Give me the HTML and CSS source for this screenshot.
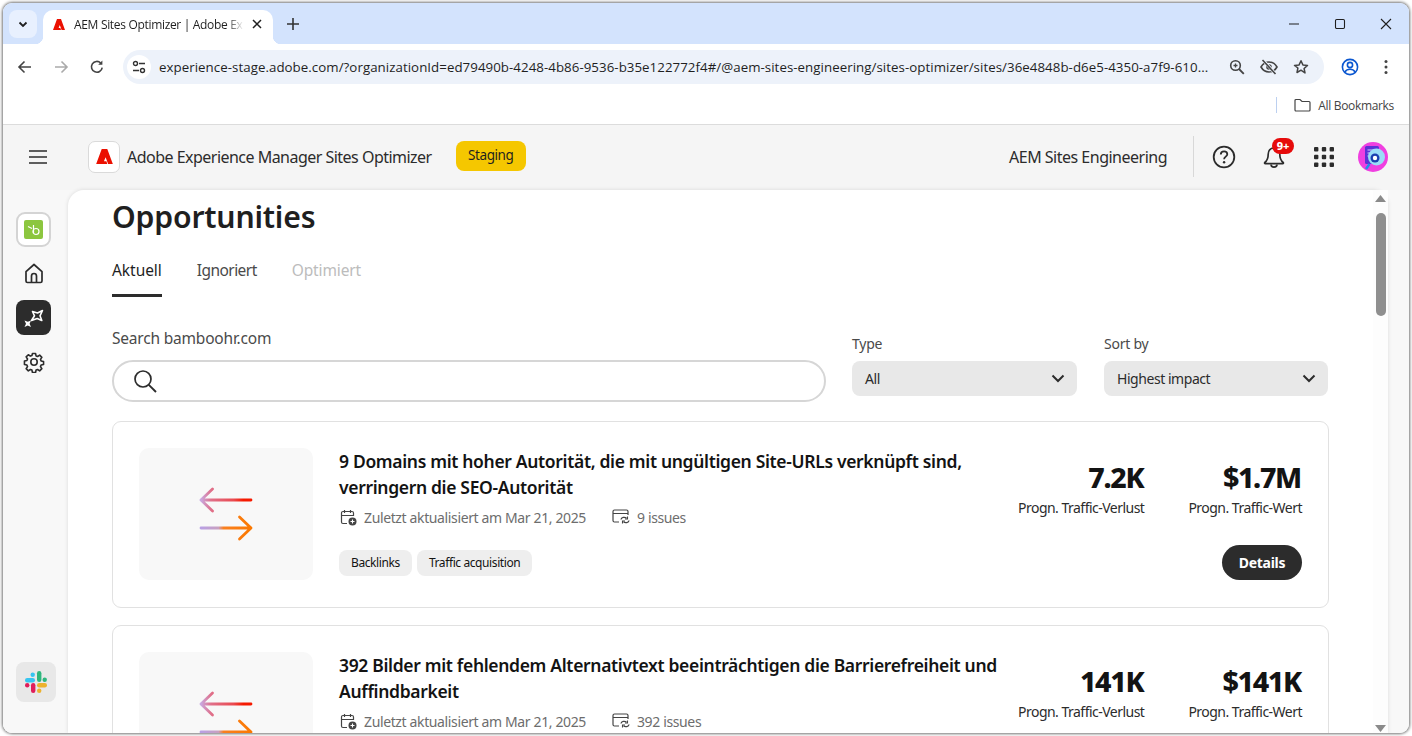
FILE: index.html
```html
<!DOCTYPE html>
<html lang="de">
<head>
<meta charset="utf-8">
<title>AEM Sites Optimizer | Adobe Experience Manager</title>
<link rel="stylesheet" href="styles.css">
</head>
<body>
<div class="window">
  <div class="tabstrip">
    <div class="tab-search"><svg width="12" height="12" viewBox="0 0 12 12"><path d="M2.5 4.5 6 8l3.5-3.5" fill="none" stroke="#1f1f1f" stroke-width="1.8"/></svg></div>
    <div class="tab">
      <svg class="tab-fav" width="12" height="11" viewBox="0 0 30 27"><path d="M10 0h10l10 27H21.500L17 15l-3 7h4.500l1.500 5H0z" fill="#eb1000"/></svg>
      <span class="tab-title">AEM Sites Optimizer | Adobe Ex</span>
      <svg width="12" height="12" viewBox="0 0 12 12"><path d="M2 2l8 8M10 2l-8 8" stroke="#1f1f1f" stroke-width="1.5"/></svg>
    </div>
    <svg class="new-tab" width="14" height="14" viewBox="0 0 14 14"><path d="M7 1v12M1 7h12" stroke="#333" stroke-width="1.6"/></svg>
    <div class="win-controls">
      <svg width="12" height="12" viewBox="0 0 12 12"><path d="M1 6h10" stroke="#1f1f1f" stroke-width="1.1"/></svg>
      <svg width="12" height="12" viewBox="0 0 12 12"><rect x="1.5" y="1.5" width="9" height="9" rx="1.2" fill="none" stroke="#1f1f1f" stroke-width="1.1"/></svg>
      <svg width="12" height="12" viewBox="0 0 12 12"><path d="M1 1l10 10M11 1 1 11" stroke="#1f1f1f" stroke-width="1.1"/></svg>
    </div>
  </div>

  <div class="toolbar">
    <svg width="16" height="16" viewBox="0 0 16 16"><path d="M14 8H2.500M7.500 2.500 2 8l5.500 5.500" fill="none" stroke="#444" stroke-width="1.6"/></svg>
    <svg class="gap-nav" width="16" height="16" viewBox="0 0 16 16"><path d="M2 8h11.500M8.500 2.500 14 8l-5.500 5.500" fill="none" stroke="#aaa" stroke-width="1.6"/></svg>
    <svg class="gap-nav" width="16" height="16" viewBox="0 0 16 16"><path d="M13.200 8.600A5.400 5.400 0 1 1 11.700 4" fill="none" stroke="#444" stroke-width="1.6"/><path d="M13.400 1.500v4.200H9.200z" fill="#444"/></svg>
    <div class="omnibox">
      <span class="site-chip"><svg width="14" height="14" viewBox="0 0 14 14"><circle cx="3.500" cy="3.500" r="2" fill="none" stroke="#333" stroke-width="1.4"/><path d="M7 3.500h6M1 10.500h6" stroke="#333" stroke-width="1.4"/><circle cx="10.500" cy="10.500" r="2" fill="none" stroke="#333" stroke-width="1.4"/></svg></span>
      <span class="url">experience-stage.adobe.com/?organizationId=ed79490b-4248-4b86-9536-b35e122772f4#/@aem-sites-engineering/sites-optimizer/sites/36e4848b-d6e5-4350-a7f9-610...</span>
      <svg class="omni-zoom" width="16" height="16" viewBox="0 0 16 16"><circle cx="6.500" cy="6.500" r="4.800" fill="none" stroke="#444" stroke-width="1.6"/><path d="M10 10l4.800 4.800" stroke="#444" stroke-width="1.8"/><path d="M4.500 6.500h4M6.500 4.500v4" stroke="#444" stroke-width="1.3"/></svg>
      <svg class="omni-eye" width="18" height="16" viewBox="0 0 18 16"><path d="M1 8c2-3.400 4.800-5 8-5s6 1.600 8 5c-2 3.400-4.800 5-8 5s-6-1.600-8-5z" fill="none" stroke="#444" stroke-width="1.6"/><circle cx="9" cy="8" r="2.800" fill="#444"/><path d="M3 1l12.500 14" stroke="#edf2fa" stroke-width="3"/><path d="M2.500 1l13 14" stroke="#444" stroke-width="1.6"/></svg>
      <svg class="omni-star" width="16" height="16" viewBox="0 0 16 16"><path d="m8 1.700 1.900 4.200 4.600.5-3.400 3.100.9 4.500L8 11.200 4 13.500l.9-4.500L1.500 6.400l4.600-.5z" fill="none" stroke="#444" stroke-width="1.5" stroke-linejoin="round"/></svg>
    </div>
    <svg class="profile" width="18" height="18" viewBox="0 0 18 18"><circle cx="9" cy="9" r="7.600" fill="none" stroke="#0b57d0" stroke-width="1.6"/><circle cx="9" cy="7" r="2.600" fill="none" stroke="#0b57d0" stroke-width="1.6"/><path d="M3.800 14c1.400-2 3.200-2.700 5.200-2.700s3.800.7 5.200 2.700" fill="none" stroke="#0b57d0" stroke-width="1.6"/></svg>
    <svg class="kebab" width="4" height="16" viewBox="0 0 4 16"><circle cx="2" cy="2.500" r="1.500" fill="#444"/><circle cx="2" cy="8" r="1.500" fill="#444"/><circle cx="2" cy="13.500" r="1.500" fill="#444"/></svg>
  </div>

  <div class="bookmarks">
    <span class="bm-sep"></span>
    <svg width="17" height="14" viewBox="0 0 17 14"><path d="M1 2.500a1 1 0 0 1 1-1h4l2 2h7a1 1 0 0 1 1 1v7.500a1 1 0 0 1-1 1H2a1 1 0 0 1-1-1z" fill="none" stroke="#444" stroke-width="1.2"/></svg>
    <span class="bm-label">All Bookmarks</span>
  </div>

  <div class="app">
    <header class="app-header">
      <svg class="hamburger" width="18" height="14" viewBox="0 0 18 14"><path d="M0 1h18M0 7h18M0 13h18" stroke="#2c2c2c" stroke-width="1.7"/></svg>
      <span class="logo-box"><svg width="17" height="15" viewBox="0 0 30 27"><path d="M10 0h10l10 27H21.500L17 15l-3 7h4.500l1.500 5H0z" fill="#eb1000"/></svg></span>
      <span class="app-title">Adobe Experience Manager Sites Optimizer</span>
      <span class="badge-staging">Staging</span>
      <span class="org">AEM Sites Engineering</span>
      <span class="head-sep"></span>
      <svg class="ic-help" width="24" height="24" viewBox="0 0 24 24"><circle cx="12" cy="12" r="10.300" fill="none" stroke="#2c2c2c" stroke-width="1.8"/><path d="M8.800 9.500c0-2 1.500-3.200 3.300-3.200s3.200 1.200 3.200 2.900c0 2.400-3.200 2.500-3.200 5" fill="none" stroke="#2c2c2c" stroke-width="1.8"/><circle cx="12.100" cy="17.300" r="1.200" fill="#2c2c2c"/></svg>
      <span class="bell">
        <svg width="22" height="24" viewBox="0 0 22 24"><path d="M11 3c-3.800 0-5.800 2.800-5.800 6.200 0 4.300-1.200 6.500-3.400 8.300-.5.500-.2 1.200.5 1.200h17.400c.7 0 1-.7.500-1.200-2.200-1.800-3.400-4-3.400-8.300C16.800 5.800 14.800 3 11 3z" fill="none" stroke="#2c2c2c" stroke-width="1.7"/><path d="M8 19.500c0 3.400 6 3.400 6 0" fill="none" stroke="#2c2c2c" stroke-width="1.7"/></svg>
        <span class="bell-badge">9+</span>
      </span>
      <svg class="ic-grid" width="20" height="20" viewBox="0 0 20 20"><g fill="#2c2c2c"><rect width="4.400" height="4.400" rx="1"/><rect x="7.800" width="4.400" height="4.400" rx="1"/><rect x="15.600" width="4.400" height="4.400" rx="1"/><rect y="7.800" width="4.400" height="4.400" rx="1"/><rect x="7.800" y="7.800" width="4.400" height="4.400" rx="1"/><rect x="15.600" y="7.800" width="4.400" height="4.400" rx="1"/><rect y="15.600" width="4.400" height="4.400" rx="1"/><rect x="7.800" y="15.600" width="4.400" height="4.400" rx="1"/><rect x="15.600" y="15.600" width="4.400" height="4.400" rx="1"/></g></svg>
      <svg class="avatar" width="30" height="30" viewBox="0 0 30 30"><circle cx="15" cy="15" r="15" fill="#f03fe0"/><rect x="7" y="4" width="14" height="18" rx="1.500" fill="#5b32d6"/><path d="M9.500 8h8M9.500 11h5M9.500 14h3" stroke="#d9c8ff" stroke-width="1.2"/><circle cx="18.500" cy="15" r="8.500" fill="#9adcf7"/><circle cx="17" cy="16" r="4.500" fill="#1b3fb0"/><circle cx="17" cy="16" r="2.200" fill="#fff"/><path d="M11.500 22l-3.500 5" stroke="#1e90e8" stroke-width="2.500"/></svg>
    </header>

    <div class="app-body">
      <nav class="sidebar">
        <span class="brand-box"><span class="brand-inner"><svg width="18" height="18" viewBox="0 0 18 18"><path d="M3 5.500l4 2M8.500 4v8" stroke="#fff" stroke-width="1.2" fill="none"/><circle cx="11" cy="10.500" r="3" fill="none" stroke="#fff" stroke-width="1.2"/></svg></span></span>
        <svg class="nav-home" width="20" height="21" viewBox="0 0 20 21"><path d="M2 8.700 10 1.500l8 7.200V18a1.500 1.500 0 0 1-1.500 1.500h-13A1.500 1.500 0 0 1 2 18z" fill="none" stroke="#2c2c2c" stroke-width="1.7" stroke-linejoin="round"/><path d="M7.500 19.500V13a2.500 2.500 0 0 1 5 0v6.500" fill="none" stroke="#2c2c2c" stroke-width="1.7"/></svg>
        <span class="nav-active"><svg width="22" height="22" viewBox="0 0 22 22"><path d="M9.500 4.500 14.500 6l5-2.500L17 8.800l1.800 4.700-4.600-2-5.700 2 3-4.700z" fill="none" stroke="#fff" stroke-width="1.6" stroke-linejoin="round"/><path d="M1.500 13.500 4.800 14.800 8 13.500 6.600 16.800 8 20 4.800 18.600 1.500 20 3 16.800z" fill="#fff"/></svg></span>
        <svg class="nav-gear" width="22" height="22" viewBox="0 0 22 22"><path d="M9.300 1.500h3.400l.6 2.700 1.700.7 2.300-1.500 2.400 2.400-1.500 2.300.7 1.700 2.700.6v3.400l-2.700.6-.7 1.700 1.500 2.300-2.400 2.400-2.300-1.500-1.700.7-.6 2.700H9.300l-.6-2.700-1.700-.7-2.300 1.500-2.400-2.400 1.500-2.300-.7-1.700-2.700-.6V9.900l2.700-.6.7-1.700-1.500-2.300 2.400-2.400 2.300 1.500 1.700-.7z" transform="translate(1.100 1.100) scale(.9)" fill="none" stroke="#2c2c2c" stroke-width="1.8" stroke-linejoin="round"/><circle cx="11" cy="11" r="3.200" fill="none" stroke="#2c2c2c" stroke-width="1.6"/></svg>
        <span class="slack-box"><svg width="22" height="22" viewBox="0 0 22 22"><rect x="0" y="7" width="10" height="4.400" rx="2.200" fill="#36c5f0"/><rect x="5.500" y="1.500" width="4.400" height="4.400" rx="2.200" fill="#36c5f0"/><rect x="12" y="0" width="4.400" height="11" rx="2.200" fill="#2eb67d"/><rect x="17.500" y="6.500" width="4.400" height="4.400" rx="2.200" fill="#2eb67d"/><rect x="12" y="12" width="10" height="4.400" rx="2.200" fill="#ecb22e"/><rect x="12" y="17.500" width="4.400" height="4.400" rx="2.200" fill="#ecb22e"/><rect x="6" y="12" width="4.400" height="10" rx="2.200" fill="#e01e5a"/><rect x="0" y="12" width="4.400" height="4.400" rx="2.200" fill="#e01e5a"/></svg></span>
      </nav>

      <main class="panel">
        <div class="content">
          <h1 class="page-title">Opportunities</h1>
          <div class="tabs">
            <span class="tabitem tabitem-active">Aktuell</span>
            <span class="tabitem tabitem-ignored">Ignoriert</span>
            <span class="tabitem tabitem-off">Optimiert</span>
          </div>
          <div class="filters">
            <div class="search-col">
              <span class="search-label">Search bamboohr.com</span>
              <div class="search-input"><svg width="24" height="24" viewBox="0 0 24 24"><circle cx="10" cy="10" r="8" fill="none" stroke="#2c2c2c" stroke-width="1.7"/><path d="M15.800 15.800 23 23" stroke="#2c2c2c" stroke-width="1.9"/></svg></div>
            </div>
            <div class="select-col">
              <span class="select-label">Type</span>
              <div class="select"><span>All</span><svg width="14" height="9" viewBox="0 0 14 9"><path d="M1.500 1.500 7 7l5.500-5.500" fill="none" stroke="#2c2c2c" stroke-width="2"/></svg></div>
            </div>
            <div class="select-col select-col-sort">
              <span class="select-label">Sort by</span>
              <div class="select"><span>Highest impact</span><svg width="14" height="9" viewBox="0 0 14 9"><path d="M1.500 1.500 7 7l5.500-5.500" fill="none" stroke="#2c2c2c" stroke-width="2"/></svg></div>
            </div>
          </div>

          <article class="card">
            <div class="thumb"><svg width="54" height="54" viewBox="0 0 54 54"><defs><linearGradient id="g1" x1="0" x2="1" y1="0" y2="0"><stop offset="0" stop-color="#c9a8e0"/><stop offset=".2" stop-color="#e0708a"/><stop offset=".65" stop-color="#ea4a50"/><stop offset=".85" stop-color="#f51a00"/></linearGradient><linearGradient id="g2" x1="0" x2="1" y1="0" y2="0"><stop offset="0" stop-color="#b9a0e4"/><stop offset=".35" stop-color="#c8a0c0"/><stop offset=".45" stop-color="#f98020"/><stop offset="1" stop-color="#fb7800"/></linearGradient></defs><path d="M13.500 2 2 13l11.500 11M2 13h50" fill="none" stroke="url(#g1)" stroke-width="2.8" stroke-linecap="round" stroke-linejoin="round"/><path d="M2 41h50M40.500 30 52 41 40.500 52" fill="none" stroke="url(#g2)" stroke-width="2.8" stroke-linecap="round" stroke-linejoin="round"/></svg></div>
            <div class="card-body">
              <h2 class="card-title">9 Domains mit hoher Autorität, die mit ungültigen Site-URLs verknüpft sind, verringern die SEO-Autorität</h2>
              <div class="meta">
                <svg class="meta-cal" width="17" height="17" viewBox="0 0 17 17"><path d="M7 14.500H3a1.500 1.500 0 0 1-1.500-1.500V4A1.500 1.500 0 0 1 3 2.500h9A1.500 1.500 0 0 1 13.500 4v3M1.500 6.500h12M4.500 1v3M10.500 1v3" fill="none" stroke="#444" stroke-width="1.2"/><circle cx="12.500" cy="12.500" r="4" fill="#444"/><path d="M12.500 10.500v4M10.500 12.500h4" stroke="#fff" stroke-width="1.1"/></svg>
                <span>Zuletzt aktualisiert am Mar 21, 2025</span>
                <svg class="meta-issues" width="18" height="16" viewBox="0 0 18 16"><path d="M7 13H2.500A1.500 1.500 0 0 1 1 11.500v-9A1.500 1.500 0 0 1 2.500 1h12A1.500 1.500 0 0 1 16 2.500V6M1 4.500h15" fill="none" stroke="#444" stroke-width="1.2"/><path d="M9 10.500c.3-2 3.700-3 5.500-1.200M17 11.500c-.3 2-3.700 3-5.500 1.200" fill="none" stroke="#444" stroke-width="1.3"/><path d="M15.500 7.500v2.500H13M10.500 14.500V12H13" fill="none" stroke="#444" stroke-width="1.1"/></svg>
                <span>9 issues</span>
              </div>
              <div class="tags"><span class="tag">Backlinks</span><span class="tag">Traffic acquisition</span></div>
            </div>
            <div class="card-side">
              <div class="stats">
                <div class="stat"><strong>7.2K</strong><span>Progn. Traffic-Verlust</span></div>
                <div class="stat"><strong>$1.7M</strong><span>Progn. Traffic-Wert</span></div>
              </div>
              <button class="details">Details</button>
            </div>
          </article>

          <article class="card">
            <div class="thumb"><svg width="54" height="54" viewBox="0 0 54 54"><path d="M13.500 2 2 13l11.500 11M2 13h50" fill="none" stroke="url(#g1)" stroke-width="2.8" stroke-linecap="round" stroke-linejoin="round"/><path d="M2 41h50M40.500 30 52 41 40.500 52" fill="none" stroke="url(#g2)" stroke-width="2.8" stroke-linecap="round" stroke-linejoin="round"/></svg></div>
            <div class="card-body">
              <h2 class="card-title">392 Bilder mit fehlendem Alternativtext beeinträchtigen die Barrierefreiheit und Auffindbarkeit</h2>
              <div class="meta">
                <svg class="meta-cal" width="17" height="17" viewBox="0 0 17 17"><path d="M7 14.500H3a1.500 1.500 0 0 1-1.500-1.500V4A1.500 1.500 0 0 1 3 2.500h9A1.500 1.500 0 0 1 13.500 4v3M1.500 6.500h12M4.500 1v3M10.500 1v3" fill="none" stroke="#444" stroke-width="1.2"/><circle cx="12.500" cy="12.500" r="4" fill="#444"/><path d="M12.500 10.500v4M10.500 12.500h4" stroke="#fff" stroke-width="1.1"/></svg>
                <span>Zuletzt aktualisiert am Mar 21, 2025</span>
                <svg class="meta-issues" width="18" height="16" viewBox="0 0 18 16"><path d="M7 13H2.500A1.500 1.500 0 0 1 1 11.500v-9A1.500 1.500 0 0 1 2.500 1h12A1.500 1.500 0 0 1 16 2.500V6M1 4.500h15" fill="none" stroke="#444" stroke-width="1.2"/><path d="M9 10.500c.3-2 3.700-3 5.500-1.200M17 11.500c-.3 2-3.700 3-5.500 1.200" fill="none" stroke="#444" stroke-width="1.3"/><path d="M15.500 7.500v2.500H13M10.500 14.500V12H13" fill="none" stroke="#444" stroke-width="1.1"/></svg>
                <span>392 issues</span>
              </div>
            </div>
            <div class="card-side">
              <div class="stats">
                <div class="stat"><strong>141K</strong><span>Progn. Traffic-Verlust</span></div>
                <div class="stat"><strong>$141K</strong><span>Progn. Traffic-Wert</span></div>
              </div>
            </div>
          </article>
        </div>
        <div class="scrollbar">
          <svg width="11" height="7" viewBox="0 0 11 7"><path d="M5.500 0 11 7H0z" fill="#8a8a8a"/></svg>
          <span class="thumb-bar"></span>
          <svg class="scroll-down" width="11" height="7" viewBox="0 0 11 7"><path d="M5.500 7 11 0H0z" fill="#8a8a8a"/></svg>
        </div>
      </main>
    </div>
  </div>
</div>
</body>
</html>
```
FILE: styles.css
```css
* { box-sizing: border-box; }
html, body { margin: 0; height: 100%; overflow: hidden; background: #fff; }
body { padding: 3px; font-family: "Noto Sans", "Open Sans", sans-serif; color: #2c2c2c; }

.window {
  width: 1406px; height: 730px;
  display: flex; flex-direction: column;
  border-radius: 9px; overflow: hidden;
  box-shadow: 0 0 3px 1px rgba(0,0,0,.55);
  background: #fff;
}

/* browser chrome */
.tabstrip { height: 41px; flex: none; display: flex; align-items: flex-end; background: #d3e3fd; padding-left: 6px; }
.tab-search { width: 28px; height: 28px; margin-bottom: 6px; border-radius: 8px; background: #e8f0fe; display: flex; align-items: center; justify-content: center; }
.tab { position: relative; width: 230px; height: 34px; margin-left: 6px; background: #fff; border-radius: 10px 10px 0 0; display: flex; align-items: center; padding: 0 10px 6px 10px; }
.tab::before, .tab::after { content: ""; position: absolute; bottom: 0; width: 8px; height: 8px; }
.tab::before { left: -8px; background: radial-gradient(circle at 0 0, transparent 8px, #fff 8.5px); }
.tab::after { right: -8px; background: radial-gradient(circle at 100% 0, transparent 8px, #fff 8.5px); }
.tab-fav { flex: none; }
.tab-title { flex: 1; margin-left: 9px; font: 12px "Open Sans", sans-serif; letter-spacing: -.32px; color: #1f1f1f; white-space: nowrap; -webkit-mask-image: linear-gradient(90deg, #000 152px, transparent 170px); mask-image: linear-gradient(90deg, #000 152px, transparent 170px); }
.new-tab { margin: 0 0 13px 13px; }
.win-controls { margin-left: auto; display: flex; gap: 34px; padding-right: 17px; margin-bottom: 14px; }

.toolbar { height: 44px; flex: none; display: flex; align-items: center; padding: 1px 0 0 14px; background: #fff; }
.gap-nav { margin-left: 20px; }
.omnibox { width: 1201px; height: 34px; margin-left: 18px; border-radius: 17px; background: #edf2fa; display: flex; align-items: center; padding-left: 4px; flex: none; }
.site-chip { width: 24px; height: 24px; border-radius: 50%; background: #fff; display: flex; align-items: center; justify-content: center; flex: none; }
.url { margin-left: 8px; width: 1050px; flex: none; font: 13.3px "Open Sans", sans-serif; letter-spacing: .045px; color: #1f1f1f; white-space: nowrap; }
.omni-zoom { margin-left: 20px; }
.omni-eye { margin-left: 15px; }
.omni-star { margin-left: 15px; }
.profile { margin-left: 17px; }
.kebab { margin-left: 25px; }

.bookmarks { height: 37px; flex: none; display: flex; align-items: center; justify-content: flex-end; padding: 0 15px 2px 0; background: #fff; border-bottom: 1px solid #dcdcdc; }
.bm-sep { width: 1px; height: 16px; background: #bcd0f0; margin-right: 17px; }
.bm-label { margin-left: 7px; font: 12px "Open Sans", sans-serif; letter-spacing: -.33px; color: #444; }

/* app shell */
.app { flex: 1; min-height: 0; display: flex; flex-direction: column; background: #f8f8f8; }
.app-header { height: 65px; flex: none; display: flex; align-items: center; background: #f5f5f5; padding: 0 0 2px 26px; }
.hamburger { flex: none; }
.logo-box { width: 32px; height: 32px; margin-left: 41px; border: 1px solid #dadada; border-radius: 7px; background: #fff; display: flex; align-items: center; justify-content: center; }
.app-title { margin-left: 7px; font-size: 16px; letter-spacing: -.52px; color: #2c2c2c; white-space: nowrap; }
.badge-staging { width: 70px; height: 30px; margin: -2px 0 0 24px; border-radius: 8px; background: #f5c700; font-size: 13.5px; letter-spacing: -.4px; display: flex; align-items: center; justify-content: center; color: #1f1f1f; padding-bottom: 2px; }
.org { margin-left: auto; font-size: 16px; letter-spacing: -.5px; }
.head-sep { width: 1px; height: 41px; background: #d8d8d8; margin-left: 26px; }
.ic-help { margin-left: 18px; }
.bell { position: relative; margin-left: 27px; display: flex; }
.bell-badge { position: absolute; left: 9px; top: -7px; width: 22px; height: 16px; border-radius: 8px; background: #e60b0b; color: #fff; font-size: 11px; font-weight: 800; line-height: 15px; text-align: center; }
.ic-grid { margin-left: 29px; }
.avatar { margin: 0 21px 0 24px; }

.app-body { flex: 1; min-height: 0; display: flex; }
.sidebar { width: 65px; flex: none; display: flex; flex-direction: column; align-items: flex-start; padding: 22px 0 0 13px; background: #f8f8f8; }
.brand-box { width: 35px; height: 35px; border: 2px solid #d4d4d4; border-radius: 9px; background: #fff; display: flex; align-items: center; justify-content: center; }
.brand-inner { width: 19px; height: 19px; border-radius: 2px; background: #8cc63f; display: flex; align-items: center; justify-content: center; }
.nav-home { margin: 16px 0 0 8px; }
.nav-active { width: 35px; height: 35px; margin-top: 16px; border-radius: 8px; background: #2c2c2c; display: flex; align-items: center; justify-content: center; }
.nav-gear { margin: 16px 0 0 7px; }
.slack-box { width: 40px; height: 40px; margin-top: auto; margin-bottom: 31px; border-radius: 8px; background: #e8e8e8; display: flex; align-items: center; justify-content: center; }

.panel { flex: 1; min-width: 0; margin-right: 21px; display: flex; background: #fff; border-radius: 16px 16px 0 0; box-shadow: 0 0 4px rgba(0,0,0,.12); }
.content { flex: 1; min-width: 0; overflow: hidden; padding-left: 44px; padding-right: 44px; }
.scrollbar { width: 15px; flex: none; display: flex; flex-direction: column; align-items: center; padding-top: 5px; background: #fdfdfd; }
.thumb-bar { width: 10px; height: 103px; margin-top: 11px; border-radius: 5px; background: #8f8f8f; }
.scroll-down { margin-top: auto; transform: translateY(-1px); }

.page-title { margin: 5px 0 0; font-size: 30.2px; line-height: 44px; font-weight: 600; letter-spacing: -.2px; color: #1f1f1f; }
.tabs { display: flex; gap: 35px; height: 45px; margin-top: 13px; }
.tabitem { font-size: 15.5px; letter-spacing: -.3px; line-height: 36px; color: #4a4a4a; height: 45px; }
.tabitem-active { color: #1f1f1f; letter-spacing: -.05px; border-bottom: 3px solid #2c2c2c; }
.tabitem-ignored { letter-spacing: -.55px; }
.tabitem-off { color: #bcbcbc; letter-spacing: -.12px; }

.filters { display: flex; gap: 26px; margin-top: 30px; }
.search-col { width: 714px; flex: none; display: flex; flex-direction: column; gap: 11px; padding-top: 1px; }
.search-label { font-size: 15.5px; letter-spacing: -.2px; line-height: 21px; color: #4a4a4a; }
.search-input { height: 42px; border: 2px solid #d6d6d6; border-radius: 21px; background: #fff; display: flex; align-items: center; padding-left: 19px; }
.select-col { width: 225px; flex: none; display: flex; flex-direction: column; padding-top: 7px; gap: 8px; }
.select-col-sort { width: 224px; margin-left: 1px; }
.select-label { font-size: 14px; letter-spacing: -.25px; line-height: 19px; color: #4a4a4a; }
.select { height: 35px; border-radius: 8px; background: #e8e8e8; display: flex; align-items: center; justify-content: space-between; padding: 0 12px 0 13px; font-size: 14px; letter-spacing: -.45px; color: #2c2c2c; }

.card { display: flex; min-height: 187px; margin-top: 17px; padding: 26px 26px 27px; border: 1px solid #e1e1e1; border-radius: 9px; background: #fff; }
.filters + .card { margin-top: 19px; }
.thumb { width: 174px; height: 132px; flex: none; border-radius: 10px; background: #f8f8f8; display: flex; align-items: center; justify-content: center; }
.card-body { width: 668px; flex: none; margin-left: 26px; }
.card-title { margin: 0; font-size: 17.5px; line-height: 26px; font-weight: 600; letter-spacing: -.33px; color: #131313; }
.meta { display: flex; align-items: center; margin-top: 4px; height: 26px; font-size: 14px; letter-spacing: -.37px; color: #6d6d6d; }
.meta-cal { margin-left: 1px; }
.meta span { margin-left: 7px; }
.meta-issues { margin-left: 26px; }
.tags { display: flex; gap: 5px; margin-top: 20px; }
.tag { height: 26px; padding: 0 12px; border-radius: 8px; background: #eee; font-size: 12px; letter-spacing: -.4px; line-height: 25px; color: #131313; }
.card-side { flex: 1; display: flex; flex-direction: column; align-items: flex-end; }
.stats { display: flex; justify-content: flex-end; gap: 44px; }
.stat { display: flex; flex-direction: column; align-items: flex-end; }
.stat strong { font-size: 28.5px; line-height: 36px; font-weight: 800; letter-spacing: -1.3px; color: #131313; padding-top: 11px; margin-right: 1px; box-sizing: content-box; }
.stat span { font-size: 14px; line-height: 20px; letter-spacing: -.52px; color: #2c2c2c; margin-top: 3px; white-space: nowrap; }
.details { margin-top: auto; width: 80px; height: 35px; border: 0; border-radius: 18px; background: #2c2c2c; color: #fff; font: 700 14px "Noto Sans", sans-serif; letter-spacing: -.3px; }
```
